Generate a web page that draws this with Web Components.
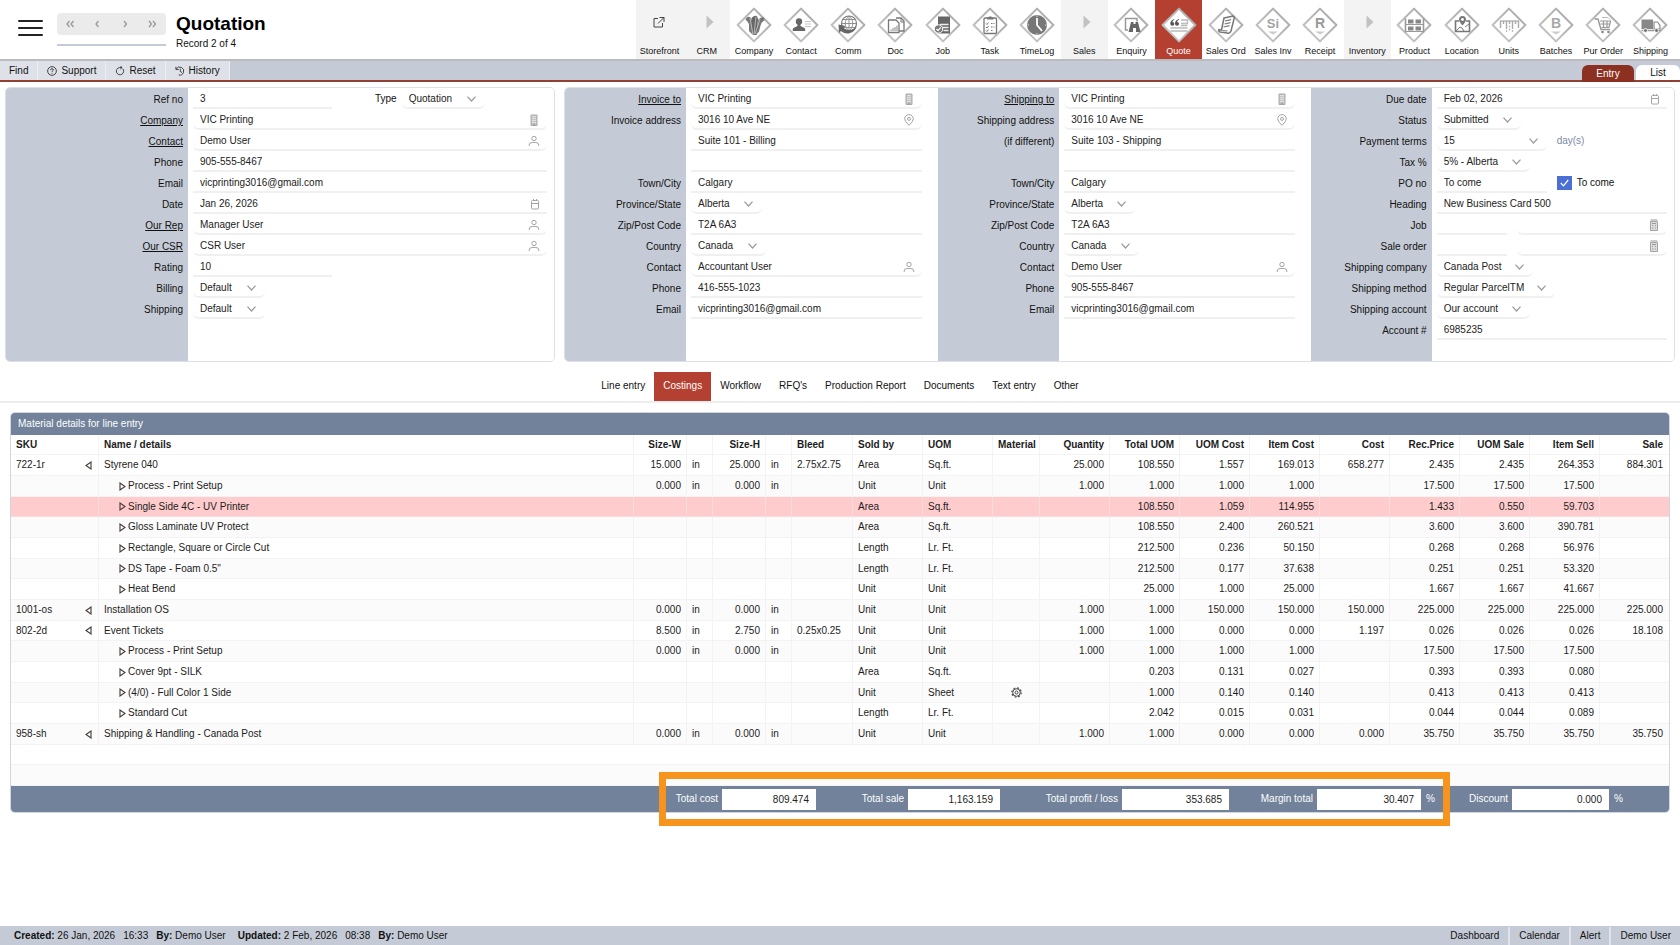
<!DOCTYPE html>
<html lang="en">
<head>
<meta charset="utf-8">
<meta name="viewport" content="width=device-width, initial-scale=1">
<title>Quotation</title>
<style>
  body { margin: 0; background: #fff; color: #111; font: 10px/12px "Liberation Sans", Arial, sans-serif; }
</style>
</head>
<body>
<qa-app></qa-app>

<script>
const base = `*{box-sizing:border-box} button,input,select{font:inherit;color:inherit;margin:0;padding:0;border:0;border-radius:0;background:none;outline-offset:-1px} a{color:inherit}`;

function define(name, render) {
  customElements.define(name, class extends HTMLElement {
    connectedCallback() {
      if (this.shadowRoot) return;
      this.attachShadow({ mode: 'open' }).innerHTML = render(this);
    }
  });
}

/* ---------- icons ---------- */
const diamond = (fill = '#fff') => `<path d="M18 1.6 34.4 18 18 34.4 1.6 18Z" fill="${fill}" stroke="url(#edge)" stroke-width="2" stroke-linejoin="round"/>`;
const navArt = {
  company: `<path d="M9.500 12.500q1-3.500 4.500-2.500l3 5v13l-4-4v-7q-1.500-3-3.500-4.500z" fill="#777"/><path d="M15.500 11q3-3 5.500-2l1 3-1.500 16h-3.500z" fill="#666"/><path d="M22 13q2.500-3.500 6-2.500l.500 3q-3.500 1.500-4 5l-1.500 6-3 3z" fill="#777"/><path d="M14 11l3 17M20 9.500l-2 18M24 12l-5 15" stroke="#ccc" stroke-width=".8"/>`,
  contact: `<circle cx="16" cy="14.500" r="3.200" fill="#666"/><path d="M14.500 16h3v3l4 2q.8.500.8 3H9.700q0-2.500.8-3l4-2z" fill="#666"/><path d="M22 14.500h6M22 17h6M22 19.500h6" stroke="#c4c4c4" stroke-width="1"/>`,
  comm: `<circle cx="19" cy="16.500" r="7.500" fill="#fff" stroke="#777" stroke-width="1.200"/><path d="M11.500 16.500h15M13 12.500h12M13 20.500h12M19 9v15M19 9c-5 4-5 11 0 15M19 9c5 4 5 11 0 15" fill="none" stroke="#888" stroke-width=".9"/><path d="M8.500 17.500l7 1.500-2 2c4 3 9 2.500 13-1-3 7.500-11.500 8-15.500 4l-2 2z" fill="#666"/>`,
  doc: `<path d="M19 11h5l3 3v10h-5" fill="#fff" stroke="#777" stroke-width="1.300"/><path d="M11.500 13h7.500l3 3v9.500H11.500z" fill="#fff" stroke="#777" stroke-width="1.300"/><path d="M14 24v-1.500M16 24v-3M18 24v-4M20 24v-5.500" stroke="#999" stroke-width="1.200"/><path d="M24 11v4h3" fill="none" stroke="#777"/>`,
  job: `<path d="M13 9.500h12v17H13z" fill="#666"/><path d="M15 17.500h8.500M17.500 20.500h6M18.500 23.500h5" stroke="#eee" stroke-width="1.300"/><circle cx="13.500" cy="22" r="4.200" fill="#777" stroke="#fff"/><path d="M11.500 22l1.500 1.600 2.800-3.200" fill="none" stroke="#fff" stroke-width="1.300"/>`,
  task: `<rect x="12" y="11" width="12.500" height="15.500" rx="1" fill="#fff" stroke="#777" stroke-width="1.300"/><path d="M15 12.500h6.500v-2H20q-1.700-2.500-3.500 0H15z" fill="#777"/><path d="M14 16.500l1 1 1.500-2M14 20l1 1 1.500-2M14 23.500l1 1 1.500-2M19 16.500h1.500M21.500 16.500h1M19 20h1.500M21.500 20h1M19 23.500h1.500" fill="none" stroke="#777"/>`,
  timelog: `<circle cx="18" cy="18" r="10" fill="#777"/><path d="M18 11v7l5 6" fill="none" stroke="#fff" stroke-width="1.800"/><path d="M18 8.500v1.500M18 26v1.500M8.500 18H10M26 18h1.500" stroke="#ddd"/>`,
  enquiry: `<path d="M15 23h-2.500V11.500H24v3" fill="none" stroke="#999" stroke-width="1.500"/><path d="M18 15h2.500v2h2v-2H25l2.500 10h-4.500v-4h-3v4h-4.500z" fill="#666"/>`,
  quote: `<path d="M13.300 12q-4 1-4 4.500c0 3 4 2.800 4 .2q0-1.800-2-1.800 0-1.300 2-2.200zM18 12q-4 1-4 4.500c0 3 4 2.800 4 .2q0-1.800-2-1.800 0-1.300 2-2.200z" fill="#555"/><path d="M20 13h6.500v3.500H20M20 18.500h6.500M9.500 21h17M9.500 24h17" fill="none" stroke="#bbb" stroke-width="1.400"/>`,
  salesord: `<path d="M16 11l9-2q2 1 1 3l-3 12q-1 3-4 2l-7-1q-2-1-1-2.500l2.500.5z" fill="#fff" stroke="#777" stroke-width="1.500"/><path d="M17 14l6-1.300M16.500 17l6-1.300M15.500 20l6-1.300M14.500 23.500l5 .5" stroke="#777" stroke-width="1.200"/>`,
  salesinv: `<text x="18" y="21" text-anchor="middle" font-size="13" font-weight="700" fill="#a3a3a3">Si</text><path d="M13 24.500h10l-5 3z" fill="#ccc"/>`,
  receipt: `<text x="18" y="21" text-anchor="middle" font-size="14" font-weight="700" fill="#999">R</text><path d="M13 24.500h10l-5 3z" fill="#ccc"/>`,
  batches: `<text x="18" y="21" text-anchor="middle" font-size="14" font-weight="700" fill="#a8a8a8">B</text><path d="M13 24.500h10l-5 3z" fill="#ccc"/>`,
  product: `<path d="M9.500 11.500v14M27.500 11.500v14" stroke="#999" stroke-width="1.600"/><path d="M9.500 17.500h18M9.500 24.500h18" stroke="#999" stroke-width="1.200"/><path d="M12 12.500h5.500v4H12zM19.500 12.500h5.500v4h-5.500zM12 19.500h5.500v4H12zM19.500 19.500h5.500v4h-5.500z" fill="#888"/>`,
  location: `<path d="M15 14h-3.500v10.500h14V14H22" fill="none" stroke="#777" stroke-width="1.600"/><path d="M18.500 18.500q-3.500-4-3.500-6a3.500 3.500 0 0 1 7 0q0 2-3.500 6z" fill="#777"/><circle cx="18.500" cy="12.500" r="1.400" fill="#fff"/><path d="M12 24l4-4 2 1 2 3M21 20l4-3" fill="none" stroke="#777"/>`,
  units: `<path d="M9 14h19" stroke="#aaa" stroke-width="1.300"/><path d="M9.500 14v7M12.500 14v3M15.500 14v8M18.500 14v3M21.500 14v8M24.500 14v3M27.500 14v7" stroke="#aaa" stroke-width="1.400"/><path d="M15.500 23v2M18.500 18.500v6M21.500 23v2" stroke="#bbb" stroke-width="1.300" stroke-dasharray="2 1"/>`,
  purorder: `<path d="M9.500 12h3.500l3 10.500h9" fill="none" stroke="#999" stroke-width="1.400"/><path d="M15 14h10.500l-1.500 6.500h-7.500M15.500 17h9.500M18.500 14v6M22 14v6" fill="none" stroke="#999" stroke-width="1.200"/><path d="M17 10.500h6l2 2" fill="none" stroke="#bbb"/><circle cx="17.500" cy="25" r="1.300" fill="#888"/><circle cx="23.500" cy="25" r="1.300" fill="#888"/>`,
  shipping: `<path d="M9.500 12.500h11.500v9.500H9.500z" fill="#888"/><path d="M22 15h3.500l2.500 3.500V22h-6z" fill="#fff" stroke="#888" stroke-width="1.200"/><path d="M9.500 23.500h19" stroke="#999" stroke-width="1.500"/><circle cx="13.500" cy="23.500" r="2" fill="#777" stroke="#fff" stroke-width=".8"/><circle cx="24.500" cy="23.500" r="2" fill="#777" stroke="#fff" stroke-width=".8"/>`
};
const chevron = `<svg class="chev" width="9" height="6" viewBox="0 0 9 6" fill="none" stroke="#999" stroke-width="1.200"><path d="M.5.700 4.500 5l4-4.300"/></svg>`;
const fieldArt = {
  building: `<path d="M3 1h6v10.500H3z" fill="#c4c4c4" stroke="#aaa"/><path d="M4.500 2.500h1M6.500 2.500h1M4.500 4.500h1M6.500 4.500h1M4.500 6.500h1M6.500 6.500h1M4.500 8.500h1M6.500 8.500h1" stroke="#fff"/><path d="M5.500 10h1v2h-1z" fill="#fff"/>`,
  person: `<circle cx="6" cy="3.500" r="2.200"/><path d="M1.200 11V10q0-2.500 3-2.500h3.600q3 0 3 2.500v1"/>`,
  pin: `<path d="M6 11.300Q1.700 7.500 1.700 4.900a4.300 4.300 0 0 1 8.600 0Q10.300 7.500 6 11.300z"/><circle cx="6" cy="4.900" r="1.500"/>`,
  calendar: `<rect x="3.500" y="2.500" width="7" height="8.500" rx="1"/><path d="M3.500 5.500h7M5.500 1v2M8.500 1v2"/>`,
  sheet: `<path d="M2.500 2.500h7v9h-7z" fill="#ddd"/><path d="M2.500 1h7M4 4.500h4M4 6.500h1M7 6.500h1M4 9h1.500M7 9h1" stroke="#999"/>`
};

/* ---------- application shell ---------- */
define('qa-app', () => `<style>${base}
  :host{display:flex;flex-direction:column;min-height:100vh}
  .panels{display:grid;grid-template-columns:550fr 1111fr;gap:9px;padding:5px 5px 10px}
  .main{padding:9px 10px 60px}
  qa-status{margin-top:auto}
</style>
<qa-header></qa-header>
<qa-toolbar></qa-toolbar>
<div class="panels">
  <qa-panel>
    <qa-section style="--label-w:182px">
      <qa-field label="Ref no" value="3" style="--w:139px"><qa-field inline label="Type" kind="select" value="Quotation" style="--w:83px"></qa-field></qa-field>
      <qa-field link label="Company" value="VIC Printing" icon="building"></qa-field>
      <qa-field link label="Contact" value="Demo User" icon="person"></qa-field>
      <qa-field label="Phone" value="905-555-8467"></qa-field>
      <qa-field label="Email" value="vicprinting3016@gmail.com"></qa-field>
      <qa-field label="Date" value="Jan 26, 2026" icon="calendar"></qa-field>
      <qa-field link label="Our Rep" value="Manager User" icon="person"></qa-field>
      <qa-field link label="Our CSR" value="CSR User" icon="person"></qa-field>
      <qa-field label="Rating" value="10" style="--w:139px"></qa-field>
      <qa-field label="Billing" kind="select" value="Default" style="--w:72px"></qa-field>
      <qa-field label="Shipping" kind="select" value="Default" style="--w:72px"></qa-field>
    </qa-section>
  </qa-panel>
  <qa-panel>
    <qa-section style="--end:16px">
      <qa-field link label="Invoice to" value="VIC Printing" icon="building"></qa-field>
      <qa-field label="Invoice address" value="3016 10 Ave NE" icon="pin"></qa-field>
      <qa-field hint="Invoice address line 2" value="Suite 101 - Billing"></qa-field>
      <qa-field hint="Invoice address line 3" value=""></qa-field>
      <qa-field label="Town/City" value="Calgary"></qa-field>
      <qa-field label="Province/State" kind="select" value="Alberta" style="--w:71px"></qa-field>
      <qa-field label="Zip/Post Code" value="T2A 6A3"></qa-field>
      <qa-field label="Country" kind="select" value="Canada" style="--w:75px"></qa-field>
      <qa-field label="Contact" value="Accountant User" icon="person"></qa-field>
      <qa-field label="Phone" value="416-555-1023"></qa-field>
      <qa-field label="Email" value="vicprinting3016@gmail.com"></qa-field>
    </qa-section>
    <qa-section style="--end:16px">
      <qa-field link label="Shipping to" value="VIC Printing" icon="building"></qa-field>
      <qa-field label="Shipping address" value="3016 10 Ave NE" icon="pin"></qa-field>
      <qa-field label="(if different)" value="Suite 103 - Shipping"></qa-field>
      <qa-field hint="Shipping address line 3" value=""></qa-field>
      <qa-field label="Town/City" value="Calgary"></qa-field>
      <qa-field label="Province/State" kind="select" value="Alberta" style="--w:71px"></qa-field>
      <qa-field label="Zip/Post Code" value="T2A 6A3"></qa-field>
      <qa-field label="Country" kind="select" value="Canada" style="--w:75px"></qa-field>
      <qa-field label="Contact" value="Demo User" icon="person"></qa-field>
      <qa-field label="Phone" value="905-555-8467"></qa-field>
      <qa-field label="Email" value="vicprinting3016@gmail.com"></qa-field>
    </qa-section>
    <qa-section>
      <qa-field label="Due date" value="Feb 02, 2026" icon="calendar"></qa-field>
      <qa-field label="Status" kind="select" value="Submitted" style="--w:84px"></qa-field>
      <qa-field label="Payment terms" kind="select" value="15" style="--w:110px"><qa-unit>day(s)</qa-unit></qa-field>
      <qa-field label="Tax %" kind="select" value="5% - Alberta" style="--w:93px"></qa-field>
      <qa-field label="PO no" value="To come" style="--w:110px"><qa-check label="To come"></qa-check></qa-field>
      <qa-field label="Heading" value="New Business Card 500"></qa-field>
      <qa-field label="Job" value="" style="--w:70px"><qa-field inline hint="Job name" icon="sheet" value=""></qa-field></qa-field>
      <qa-field label="Sale order" value="" style="--w:70px"><qa-field inline hint="Sale order name" icon="sheet" value=""></qa-field></qa-field>
      <qa-field label="Shipping company" kind="select" value="Canada Post" style="--w:96px"></qa-field>
      <qa-field label="Shipping method" kind="select" value="Regular ParcelTM" style="--w:118px"></qa-field>
      <qa-field label="Shipping account" kind="select" value="Our account" style="--w:93px"></qa-field>
      <qa-field label="Account #" value="6985235"></qa-field>
    </qa-section>
  </qa-panel>
</div>
<qa-tabs items="Line entry|Costings|Workflow|RFQ's|Production Report|Documents|Text entry|Other" selected="Costings"></qa-tabs>
<div class="main"><qa-costings></qa-costings></div>
<qa-status></qa-status>`);

/* ---------- header ---------- */
define('qa-header', () => `<style>${base}
  :host{display:flex;height:61px;border-bottom:2px solid #bbbbbd}
  .brand{flex:0 0 636px;display:flex;align-items:flex-start}
  .menu{display:grid;gap:5px;width:25px;margin:20px 14px 0 18px;padding:0}
  .menu i{height:2px;background:#222;border-radius:1px}
  .pager{width:109px;margin:13px 10px 0 0;border-bottom:2px solid #c5cbd6;padding-bottom:9px}
  .steps{display:grid;grid-template-columns:repeat(4,1fr);height:22px;background:#ebebeb;border-radius:4px}
  .steps button{display:grid;place-items:center}
  h1{margin:13px 0 0;font-size:19px;line-height:22px;font-weight:700;color:#000}
  p{margin:3px 0 0}
  nav{flex:1;display:grid;grid-template-columns:repeat(22,1fr);padding-right:6px}
</style>
<div class="brand">
  <button class="menu" aria-label="Menu"><i></i><i></i><i></i></button>
  <div class="pager"><div class="steps">
    ${[['First','M3.500 1 1 4l2.500 3M7.500 1 5 4l2.500 3'],['Previous','M5.500 1 3 4l2.500 3'],['Next','M3 1l2.500 3L3 7'],['Last','M1 1l2.500 3L1 7M5 1l2.500 3L5 7']].map(([n,d]) =>
      `<button aria-label="${n}"><svg width="9" height="8" viewBox="0 0 9 8" fill="none" stroke="#999" stroke-width="1.300"><path d="${d}"/></svg></button>`).join('')}
  </div></div>
  <div><h1>Quotation</h1><p>Record 2 of 4</p></div>
</div>
<nav aria-label="Modules">
  ${[['Storefront','store'],['CRM','group'],['Company','company'],['Contact','contact'],['Comm','comm'],['Doc','doc'],['Job','job'],['Task','task'],['TimeLog','timelog'],['Sales','group'],['Enquiry','enquiry'],['Quote','quote'],['Sales Ord','salesord'],['Sales Inv','salesinv'],['Receipt','receipt'],['Inventory','group'],['Product','product'],['Location','location'],['Units','units'],['Batches','batches'],['Pur Order','purorder'],['Shipping','shipping']]
    .map(([l,i]) => `<qa-module icon="${i}"${l === 'Quote' ? ' active' : ''}>${l}</qa-module>`).join('')}
</nav>`);

define('qa-module', el => {
  const icon = el.getAttribute('icon');
  const plain = icon === 'store' || icon === 'group';
  const art = icon === 'store'
    ? `<path d="M16 11.500h-4v8.500h8.500V16M17.500 10.500h4.500V15M22 10.500l-6 6" fill="none" stroke="#444" stroke-width="1"/>`
    : icon === 'group' ? `<path d="M15.500 8.500l7 6.500-7 6.500z" transform="translate(2 0)" fill="#c2c2c2"/>`
    : diamond() + navArt[icon];
  return `<style>${base}
    :host{display:block;min-width:0;color:#111;${plain ? 'background:#f3f3f3' : ''}}
    :host([active]){background:#b34030;color:#fff}
    a{display:flex;flex-direction:column;align-items:center;height:59px;padding-top:7px;text-decoration:none;font-size:9px;line-height:12px;white-space:nowrap}
    svg{display:block;margin-bottom:2px;font-family:"Liberation Sans",sans-serif}
  </style>
  <a href="#"><svg width="36" height="36" viewBox="0 0 36 36" aria-hidden="true"><defs><linearGradient id="edge" x1="0" y1="1" x2="1" y2="0"><stop offset="0" stop-color="#c9c9c9"/><stop offset="1" stop-color="#a6a6a6"/></linearGradient></defs>${art}</svg><span><slot></slot></span></a>`;
});

/* ---------- toolbar ---------- */
define('qa-toolbar', () => `<style>${base}
  :host{display:flex;height:21px;background:#c5cbd6;border-bottom:2px solid #943f33;align-items:stretch}
  .b{display:flex;align-items:center;gap:4px;padding:1px 9px 0;background:#dee2e8;border-right:1px solid #eceef2;cursor:pointer}
  .b svg{display:block;fill:none;stroke:#333;stroke-width:1}
  .tabs{margin-left:auto;display:flex;gap:2px;padding-top:4px}
  .tabs a{display:flex;align-items:center;justify-content:center;text-decoration:none;border-radius:6px 6px 0 0;background:#fff;width:44px;height:15px}
  .tabs a.on{background:#8c3022;color:#fff;width:52px;height:17px}
</style>
<button class="b">Find</button>
<button class="b"><svg width="10" height="10" viewBox="0 0 11 11"><circle cx="5.500" cy="5.500" r="4.800"/><path d="M4 4.500q0-1.500 1.500-1.500T7 4.300q0 .7-.8 1.100T5.500 6.500M5.500 7.500v1"/></svg>Support</button>
<button class="b"><svg width="10" height="10" viewBox="0 0 11 11"><path d="M8.500 3A4 4 0 1 1 5 1.700h2.500M5.800 0l2 1.700-2 1.800"/></svg>Reset</button>
<button class="b"><svg width="10" height="10" viewBox="0 0 11 11"><path d="M1 .800v3h3M1.300 3.500A4.400 4.400 0 1 1 4 9.800M5.800 3v3l2 1.200"/></svg>History</button>
<div class="tabs"><a class="on" href="#">Entry</a><a href="#">List</a></div>`);

/* ---------- form panels ---------- */
define('qa-panel', () => `<style>
  :host{display:grid;grid-auto-flow:column;grid-auto-columns:auto;grid-template-columns:1fr;min-height:275px;border:1px solid #dbe0e8;border-radius:5px;overflow:hidden;background:#fff;box-sizing:border-box}
  :host(:last-child){grid-template-columns:374fr 373fr 364fr}
</style><slot></slot>`);

define('qa-section', () => `<style>
  :host{display:block;min-width:0;background:linear-gradient(to right,#c5cbd6 var(--label-w,121px),#fff var(--label-w,121px))}
</style><slot></slot>`);

define('qa-field', el => {
  const a = n => el.getAttribute(n);
  const label = a('label'), value = a('value') || '', icon = a('icon'), select = a('kind') === 'select';
  const inline = el.hasAttribute('inline');
  const text = el.hasAttribute('link') ? `<a href="#">${label}</a>` : label;
  const aria = label ? '' : ` aria-label="${a('hint')}"`;
  const control = select
    ? `<select id="c"${aria}><option>${value}</option></select>${chevron}`
    : `<input id="c" type="text" value="${value}"${aria}>`;
  const art = icon ? `<svg class="ico" width="12" height="12" viewBox="0 0 12 12" fill="none" stroke="#a4a4a4" aria-hidden="true">${fieldArt[icon]}</svg>` : '';
  return `<style>${base}
    :host{display:flex;height:21px;align-items:stretch;padding-right:var(--end,7px)}
    :host([inline]){flex:1;padding:0;--end:0px;${label ? 'margin-left:43px;flex:none' : 'margin-left:10px;--w:auto'}}
    label{flex:0 0 var(--label-w,121px);margin-right:5px;padding:6px 5px 0 0;text-align:right;white-space:nowrap;color:#111}
    :host([inline]) label{flex:none;margin:0;padding-top:5px}
    .box{display:flex;position:relative;flex:0 1 var(--w,100%);min-width:0;border-bottom:2px solid #f0f0f0;${select || (icon && icon !== 'calendar') ? 'border-radius:0 0 6px 6px' : ''}}
    :host([inline]) .box{flex:${label ? '0 0 var(--w)' : '1'}}
    input,select{flex:1;width:100%;min-width:0;height:19px;padding:2px 7px 0;appearance:none;-webkit-appearance:none;color:#222}
    .chev{position:absolute;right:9px;top:8px;pointer-events:none}
    .ico{position:absolute;right:7px;top:5px}
  </style>
  ${label ? `<label for="c">${text}</label>` : inline ? '' : '<label></label>'}
  <span class="box">${control}${art}</span><slot></slot>`;
});

define('qa-unit', () => `<style>:host{display:block;padding:5px 0 0 10px;color:#7c8aa5}</style><slot></slot>`);

define('qa-check', el => `<style>${base}
  :host{display:block;padding:4px 0 0 10px}
  label{display:flex;align-items:center;gap:5px;white-space:nowrap}
  .c{position:relative;display:block;width:15px;height:14px}
  input{display:block;appearance:none;-webkit-appearance:none;width:15px;height:14px;background:#fff;border:1px solid #4b6fd3}
  input:checked{background:#4b6fd3}
  svg{position:absolute;left:3px;top:3px;pointer-events:none}
</style><label><span class="c"><input type="checkbox" checked><svg width="9" height="8" viewBox="0 0 9 8" fill="none" stroke="#fff" stroke-width="1.200"><path d="M.8 4 3.500 6.800 8.200 1"/></svg></span>${el.getAttribute('label')}</label>`);

/* ---------- tabs ---------- */
define('qa-tabs', el => `<style>${base}
  :host{display:flex;justify-content:center;border-bottom:2px solid #ededed;flex-wrap:wrap}
  a{padding:8px 9px 9px;text-decoration:none;color:#111;line-height:12px}
  a.on{background:#b34030;color:#fff}
</style>${el.getAttribute('items').split('|').map(t => `<a href="#"${t === el.getAttribute('selected') ? ' class="on" aria-current="page"' : ''}>${t}</a>`).join('')}`);

/* ---------- costings table ---------- */
const columns = [['SKU',88],['Name / details',0],['Size-W',53,'n'],['',26],['Size-H',53,'n'],['',26],['Bleed',61],['Sold by',70],['UOM',70],['Material',47,'c'],['Quantity',70,'n'],['Total UOM',70,'n'],['UOM Cost',70,'n'],['Item Cost',70,'n'],['Cost',70,'n'],['Rec.Price',70,'n'],['UOM Sale',70,'n'],['Item Sell',70,'n'],['Sale',69,'n']];
/* sku | name | width | height | bleed | sold by | uom | material | quantity | total uom … sale */
const lines = `722-1r|Styrene 040|15.000|25.000|2.75x2.75|Area|Sq.ft.||25.000|108.550|1.557|169.013|658.277|2.435|2.435|264.353|884.301
|Process - Print Setup|0.000|0.000||Unit|Unit||1.000|1.000|1.000|1.000||17.500|17.500|17.500|
|Single Side 4C - UV Printer||||Area|Sq.ft.|||108.550|1.059|114.955||1.433|0.550|59.703|
|Gloss Laminate UV Protect||||Area|Sq.ft.|||108.550|2.400|260.521||3.600|3.600|390.781|
|Rectangle, Square or Circle Cut||||Length|Lr. Ft.|||212.500|0.236|50.150||0.268|0.268|56.976|
|DS Tape - Foam 0.5"||||Length|Lr. Ft.|||212.500|0.177|37.638||0.251|0.251|53.320|
|Heat Bend||||Unit|Unit|||25.000|1.000|25.000||1.667|1.667|41.667|
1001-os|Installation OS|0.000|0.000||Unit|Unit||1.000|1.000|150.000|150.000|150.000|225.000|225.000|225.000|225.000
802-2d|Event Tickets|8.500|2.750|0.25x0.25|Unit|Unit||1.000|1.000|0.000|0.000|1.197|0.026|0.026|0.026|18.108
|Process - Print Setup|0.000|0.000||Unit|Unit||1.000|1.000|1.000|1.000||17.500|17.500|17.500|
|Cover 9pt - SILK||||Area|Sq.ft.|||0.203|0.131|0.027||0.393|0.393|0.080|
|(4/0) - Full Color 1 Side||||Unit|Sheet|gear||1.000|0.140|0.140||0.413|0.413|0.413|
|Standard Cut||||Length|Lr. Ft.|||2.042|0.015|0.031||0.044|0.044|0.089|
958-sh|Shipping & Handling - Canada Post|0.000|0.000||Unit|Unit||1.000|1.000|0.000|0.000|0.000|35.750|35.750|35.750|35.750`
  .split('\n').map(r => r.split('|'));
const gear = `<svg width="11" height="11" viewBox="0 0 11 11" fill="none" stroke="#444"><circle cx="5.500" cy="5.500" r="3.800"/><circle cx="5.500" cy="5.500" r="1.500"/><circle cx="5.500" cy="5.500" r="4.700" stroke-width="1.200" stroke-dasharray="1.800 1.890"/></svg>`;
const leftTri = `<svg width="7" height="9" viewBox="0 0 7 9" fill="none" stroke="#443a36" stroke-width="1.100"><path d="M6 1v7L1 4.500z"/></svg>`;
const rightTri = `<svg width="7" height="9" viewBox="0 0 7 9" fill="none" stroke="#443a36" stroke-width="1.100"><path d="M1 1v7l5-3.500z"/></svg>`;

define('qa-costings', () => {
  const row = (r, i) => {
    const [sku, name, w, h, bleed, sold, uom, mat, ...nums] = r;
    const cells = [
      sku ? `<span class="sku">${sku}${leftTri}</span>` : '',
      sku ? name.replace('&', '&amp;') : `<span class="sub">${rightTri}${name}</span>`,
      w, w && 'in', h, h && 'in', bleed, sold, uom, mat && gear, ...nums];
    return `<tr${i === 2 ? ' class="warn"' : ''}>${cells.map((c, k) => `<td class="${columns[k][2] || ''}">${c}</td>`).join('')}</tr>`;
  };
  return `<style>${base}
  :host{display:block;border:1px solid #cfd6df;border-radius:5px;background:#fff}
  h2{margin:0;height:22px;padding:5px 7px;background:#71829a;color:#fff;font-size:10px;line-height:12px;font-weight:400;border-radius:4px 4px 0 0}
  table{width:100%;table-layout:fixed;border-collapse:separate;border-spacing:0}
  th,td{height:inherit;padding:0 5px;text-align:left;white-space:nowrap;overflow:hidden;border-right:1px solid #f3f3f3;border-bottom:1px solid #f3f3f3;line-height:12px;vertical-align:middle;color:#1c1c1c}
  th:last-child,td:last-child{border-right:0;padding-right:6px}
  thead tr{height:20px}
  tbody tr{height:21px}
  tbody tr:nth-child(3n){height:20px}
  tbody tr:nth-child(even){background:#fbfbfb}
  tbody tr.warn{background:#ffcccd}
  .warn td{border-color:#fbdcdd}
  .n{text-align:right}.c{text-align:center}
  svg{display:block}
  .c svg{margin:0 auto}
  .sku{display:flex;justify-content:space-between;align-items:center;padding-right:1px}
  .sub{display:flex;align-items:center;gap:2px;padding-left:15px}
</style>
<h2>Material details for line entry</h2>
<table>
  <colgroup>${columns.map(c => `<col${c[1] ? ` style="width:${c[1]}px"` : ''}>`).join('')}</colgroup>
  <thead><tr>${columns.map(c => `<th class="${c[2] || ''}" scope="col">${c[0]}</th>`).join('')}</tr></thead>
  <tbody>${lines.map(row).join('')}<tr><td colspan="19"></td></tr><tr><td colspan="19"></td></tr></tbody>
</table>
<qa-totals></qa-totals>`;
});

define('qa-totals', () => {
  const f = (id, label, value, w, iw, unit) => `<span class="f" style="width:${w}px"><label for="${id}">${label}</label><input id="${id}" type="text" value="${value}" style="width:${iw}px"></span>${unit ? `<span class="u">${unit}</span>` : ''}`;
  return `<style>${base}
  :host{display:flex;justify-content:flex-end;height:26px;background:#71829a;color:#fff;padding-right:38px;border-radius:0 0 4px 4px}
  .group{position:relative;display:flex}
  .group::after{content:"";position:absolute;inset:-14px -7px;border:7px solid #f7941d;pointer-events:none}
  .f{display:flex;align-items:center;justify-content:flex-end;gap:4px;white-space:nowrap}
  input{height:21px;background:#fff;color:#222;text-align:right;padding:0 7px}
  .u{width:22px;padding-left:5px;align-self:center}
</style>
<div class="group">${f('cost','Total cost','809.474',150,94)}${f('sale','Total sale','1,163.159',184,92)}${f('profit','Total profit / loss','353.685',229,107)}${f('margin','Margin total','30.407',192,104,'%')}</div>
${f('discount','Discount','0.000',166,97,'%')}`;
});

/* ---------- status bar ---------- */
define('qa-status', () => `<style>${base}
  :host{display:flex;height:19px;align-items:center;background:#c5cbd6;padding:1px 0 0 14px;white-space:pre;box-sizing:border-box}
  .by{margin:0 12px 0 8px}
  .t{margin-left:8px}
  nav{margin-left:auto;display:flex;align-self:stretch}
  a{display:flex;align-items:center;padding:0 9px;text-decoration:none;border-left:2px solid #e0e4ea}
  a:first-child{border:0}
</style>
<span><b>Created:</b> 26 Jan, 2026</span><span class="t">16:33</span><span class="by"><b>By:</b> Demo User</span>
<span><b>Updated:</b> 2 Feb, 2026</span><span class="t">08:38</span><span class="by"><b>By:</b> Demo User</span>
<nav><a href="#">Dashboard</a><a href="#">Calendar</a><a href="#">Alert</a><a href="#">Demo User</a></nav>`);
</script>
</body>
</html>
